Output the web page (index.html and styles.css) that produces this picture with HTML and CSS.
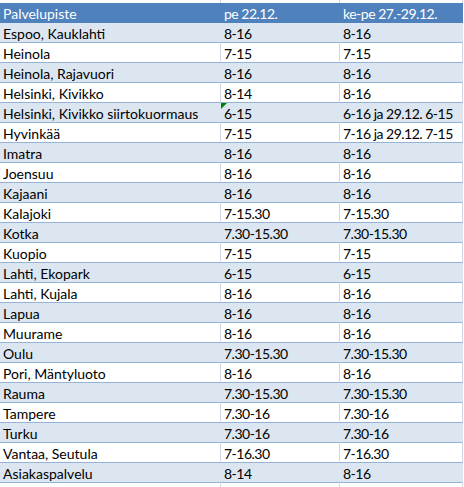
FILE: index.html
```html
<!DOCTYPE html>
<html lang="fi">
<head>
<meta charset="utf-8">
<title>Palvelupisteiden aukioloajat</title>
<link rel="stylesheet" href="styles.css">
</head>
<body>
<div class="sheet">
  <div class="gap"></div><div class="gap"></div><div class="gap"></div>

  <div class="hd">Palvelupiste</div><div class="hd t">pe 22.12.</div><div class="hd t">ke-pe 27.-29.12.</div>

  <div class="c b">Espoo, Kauklahti</div><div class="c b t">8-16</div><div class="c b t">8-16</div>
  <div class="c w">Heinola</div><div class="c w t">7-15</div><div class="c w t">7-15</div>
  <div class="c b">Heinola, Rajavuori</div><div class="c b t">8-16</div><div class="c b t">8-16</div>
  <div class="c w">Helsinki, Kivikko</div><div class="c w t">8-14</div><div class="c w t">8-16</div>
  <div class="c b">Helsinki, Kivikko siirtokuormaus</div><div class="c b t flag">6-15</div><div class="c b t">6-16 ja 29.12. 6-15</div>
  <div class="c w">Hyvinkää</div><div class="c w t">7-15</div><div class="c w t">7-16 ja 29.12. 7-15</div>
  <div class="c b">Imatra</div><div class="c b t">8-16</div><div class="c b t">8-16</div>
  <div class="c w">Joensuu</div><div class="c w t">8-16</div><div class="c w t">8-16</div>
  <div class="c b">Kajaani</div><div class="c b t">8-16</div><div class="c b t">8-16</div>
  <div class="c w">Kalajoki</div><div class="c w t">7-15.30</div><div class="c w t">7-15.30</div>
  <div class="c b">Kotka</div><div class="c b t">7.30-15.30</div><div class="c b t">7.30-15.30</div>
  <div class="c w">Kuopio</div><div class="c w t">7-15</div><div class="c w t">7-15</div>
  <div class="c b">Lahti, Ekopark</div><div class="c b t">6-15</div><div class="c b t">6-15</div>
  <div class="c w">Lahti, Kujala</div><div class="c w t">8-16</div><div class="c w t">8-16</div>
  <div class="c b">Lapua</div><div class="c b t">8-16</div><div class="c b t">8-16</div>
  <div class="c w">Muurame</div><div class="c w t">8-16</div><div class="c w t">8-16</div>
  <div class="c b">Oulu</div><div class="c b t">7.30-15.30</div><div class="c b t">7.30-15.30</div>
  <div class="c w">Pori, Mäntyluoto</div><div class="c w t">8-16</div><div class="c w t">8-16</div>
  <div class="c b">Rauma</div><div class="c b t">7.30-15.30</div><div class="c b t">7.30-15.30</div>
  <div class="c w">Tampere</div><div class="c w t">7.30-16</div><div class="c w t">7.30-16</div>
  <div class="c b">Turku</div><div class="c b t">7.30-16</div><div class="c b t">7.30-16</div>
  <div class="c w">Vantaa, Seutula</div><div class="c w t">7-16.30</div><div class="c w t">7-16.30</div>
  <div class="c b">Asiakaspalvelu</div><div class="c b t">8-14</div><div class="c b t">8-16</div>

  <div class="gap"></div><div class="gap"></div><div class="gap"></div>
</div>
</body>
</html>
```

FILE: styles.css
```css
html, body {
  margin: 0;
  padding: 0;
  background: #ffffff;
}

.sheet {
  display: grid;
  grid-template-columns: 221px 119px 123px;
  grid-template-rows: 3px repeat(24, 20px) 4px;
  width: 463px;
  font-family: Lato, "Liberation Sans", sans-serif;
  font-size: 14px;
  line-height: 17px;
  color: #000000;
}

.gap {
  border-right: 1px solid #d0d7e5;
}

.hd {
  background: #4f81bd;
  color: #ffffff;
  padding: 1px 0 0 3px;
  display: flex;
  align-items: center;
  white-space: nowrap;
  overflow: hidden;
}

.c {
  box-sizing: border-box;
  padding: 1px 0 0 3px;
  display: flex;
  align-items: center;
  white-space: nowrap;
  overflow: hidden;
  border-bottom: 1px solid #95b3d7;
  border-right: 1px solid #d0d7e5;
  position: relative;
}

.t {
  letter-spacing: -0.5px;
}

.c.b {
  background: #dce6f1;
  border-right-color: #dce6f1;
}

.c.w {
  background: #ffffff;
}

.flag::before {
  content: "";
  position: absolute;
  left: 0;
  top: 0;
  width: 0;
  height: 0;
  border-top: 6px solid #008000;
  border-right: 6px solid transparent;
}
```
